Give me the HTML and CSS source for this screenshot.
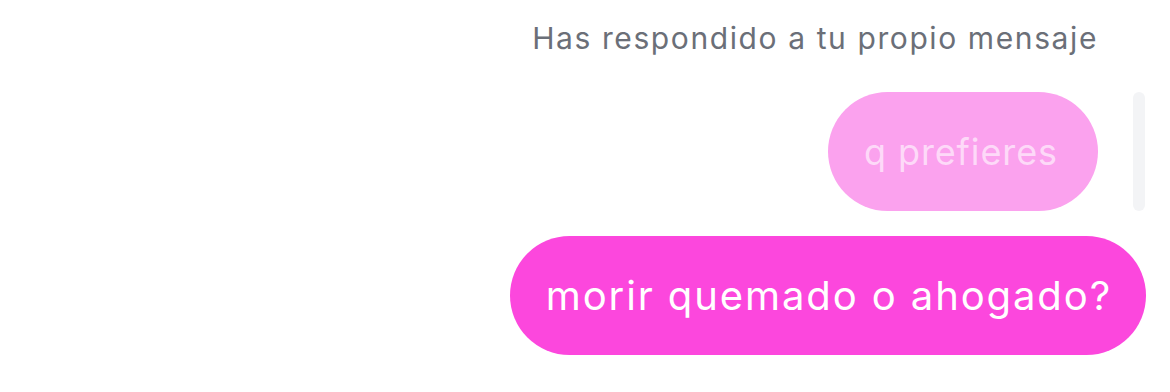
FILE: index.html
```html
<!DOCTYPE html>
<html lang="es">
<head>
<meta charset="utf-8">
<title>Mensaje</title>
<link rel="stylesheet" href="styles.css">
</head>
<body>
<div class="thread">
	<div class="reply-label">Has respondido a tu propio mensaje</div>
	<div class="reply-row">
		<div class="bubble quoted">q prefieres</div>
		<div class="reply-bar"></div>
	</div>
	<div class="bubble main">morir quemado o ahogado?</div>
</div>
</body>
</html>
```
FILE: styles.css
```css
html, body {
	margin: 0;
	padding: 0;
	background: #fff;
	font-family: "Inter", "Liberation Sans", sans-serif;
}

.thread {
	display: flex;
	flex-direction: column;
	align-items: flex-end;
	padding: 18px 24px 0 0;
}

.reply-label {
	color: #6b6f78;
	font-size: 30px;
	letter-spacing: 1.6px;
	line-height: 40px;
	margin-right: 48px;
}

.reply-row {
	display: flex;
	align-items: stretch;
	gap: 35px;
	margin-top: 34px;
	padding-right: 1px;
}

.bubble {
	border-radius: 60px;
	height: 119px;
	box-sizing: border-box;
	display: flex;
	align-items: center;
	white-space: nowrap;
}

.quoted {
	background: #fba2ee;
	color: rgba(255,255,255,0.6);
	font-size: 36px;
	letter-spacing: 0.9px;
	padding: 0 40px 0 36px;
}

.reply-bar {
	width: 12px;
	border-radius: 6px;
	background: #f3f4f6;
}

.main {
	background: #fc47dd;
	color: #fff;
	font-size: 40px;
	letter-spacing: 1.9px;
	padding: 0 34px 0 36px;
	margin-top: 25px;
}
```
